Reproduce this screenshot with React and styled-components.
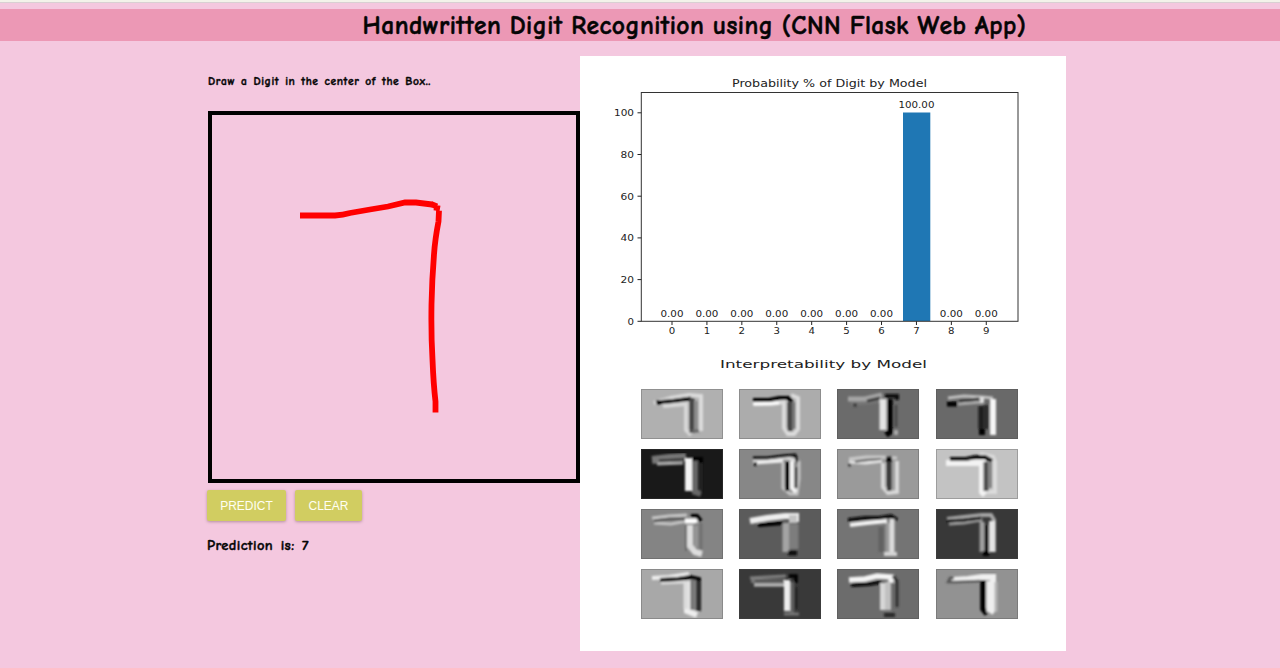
import React from "react";
import styled, { createGlobalStyle } from "styled-components";

const GlobalStyle = createGlobalStyle`
  * { box-sizing: border-box; }
  html, body { margin: 0; height: 668px; overflow: hidden; background: #f4c8df; }
  body { font-family: "Comic Sans MS", "Comic Neue", "Open Sans", sans-serif; color: #050505; }
`;

const Page = styled.div`
  height: 668px;
  border-top: 2px solid #f3f3ea;
  box-shadow: inset 0 1px 0 #d9d0d3;
  padding-top: 7px;
`;

const Header = styled.header`
  height: 32px;
  background: #ec98b5;
  display: flex;
  justify-content: center;
  padding-left: 109px;
`;

const Title = styled.h1`
  margin: 0;
  font-size: 25.5px;
  line-height: 34px;
  font-weight: 700;
  letter-spacing: 0.45px;
  word-spacing: -1px;
  font-kerning: none;
  font-variant-ligatures: none;
  -webkit-text-stroke: 0.5px #050505;
  white-space: nowrap;
`;

const Main = styled.main`
  display: flex;
  align-items: flex-start;
  padding: 15px 0 0 207px;
`;

const DrawColumn = styled.section`
  width: 373px;
  padding-top: 16px;
`;

const Hint = styled.h2`
  margin: 0 0 20px;
  padding-left: 1px;
  height: 19px;
  line-height: 19px;
  font-size: 11.5px;
  font-weight: 700;
  letter-spacing: 0.58px;
  word-spacing: 1.3px;
  font-kerning: none;
  font-variant-ligatures: none;
  -webkit-text-stroke: 0.4px #050505;
  white-space: nowrap;
`;

const Board = styled.div`
  margin-left: 1px;
  width: 372px;
  height: 372px;
  border: 4px solid #000;
  svg { display: block; }
`;

const Buttons = styled.div`
  display: flex;
  gap: 9px;
  margin-top: 7px;
`;

const Button = styled.button`
  width: ${(p) => p.$width}px;
  height: 31px;
  padding: 0;
  border: 0;
  border-radius: 2px;
  background: #d1cd61;
  color: #fffff2;
  font: 12px "Liberation Sans", Arial, sans-serif;
  box-shadow: 0 1px 3px rgba(90, 60, 70, 0.4);
`;

const Result = styled.p`
  margin: 15px 0 0;
  font-size: 14.5px;
  line-height: 20px;
  font-weight: 700;
  letter-spacing: 0.4px;
  word-spacing: 2px;
  -webkit-text-stroke: 0.4px #050505;
  white-space: nowrap;
`;

const Report = styled.section`
  width: 486px;
  height: 595px;
  background: #fff;
`;

const Chart = styled.svg`
  display: block;
  font-family: "DejaVu Sans", sans-serif;
  fill: #222;
`;

const MapGrid = styled.div`
  display: grid;
  grid-template-columns: repeat(4, 82px);
  grid-auto-rows: 50px;
  column-gap: 16.4px;
  row-gap: 9.8px;
  padding: 3.4px 0 0 60.6px;
`;

const FeatureMap = styled.svg`
  display: block;
  width: 82px;
  height: 50px;
  background: ${(p) => p.$shade};
  border: 1px solid rgba(70, 70, 70, 0.3);
`;

const Label = ({ x, y, width, size = 10, anchor = "middle", children }) => (
  <text x={x} y={y} fontSize={size} textAnchor={anchor} textLength={width} lengthAdjust="spacingAndGlyphs">
    {children}
  </text>
);

const digits = [0, 1, 2, 3, 4, 5, 6, 7, 8, 9];
const ticks = [0, 20, 40, 60, 80, 100];

// Each stroke is [path, colour, width] in tile pixels.
const maps = [
  ["#b0b0b0", [
    ["M13 14L30 9L48 6L60 7V42", "#dcdcdc", 4], ["M22 17L45 15V41L50 46", "#d8d8d8", 4],
    ["M15 13.500L32 12L50 9.500", "#000", 4], ["M51 9V44", "#444", 5], ["M55 12V42", "#8c8c8c", 4], ["M51 42H58", "#666", 3]]],
  ["#acacac", [
    ["M15 15L32 15L45 13V39L49 45H55L59 40V9L52 6", "#dcdcdc", 4], ["M14 15L40 14", "#fff", 3],
    ["M14 11H30L40 9L50 9L53 13", "#050505", 4], ["M51 13V42", "#444", 5], ["M55 13V40", "#777", 3]]],
  ["#6b6b6b", [
    ["M11 10H28L45 6", "#a5a5a5", 5], ["M14 15L30 14L44 12", "#777", 3], ["M16 16H20M30 12L43 9", "#3b3b3b", 3],
    ["M46 10V41", "#e4e4e4", 7], ["M48 7H60V11", "#111", 4], ["M53 10V43L49 46", "#050505", 5.500], ["M59 16V38", "#4c4c4c", 3], ["M59 41V46", "#aaa", 4]]],
  ["#696969", [
    ["M12 9L28 7L46 8L57 9", "#c0c0c0", 3], ["M22 15L47 13", "#aaa", 3], ["M11 15H21", "#050505", 5], ["M23 12L43 10", "#383838", 3],
    ["M45 17V40", "#1b1b1b", 5], ["M50 16V40", "#2b2b2b", 5], ["M46 40V46", "#000", 6], ["M57 10V46", "#f5f5f5", 6], ["M46 8V14", "#ddd", 4]]],
  ["#191919", [
    ["M11 11L28 9L45 8", "#777", 8], ["M16 15L42 14", "#aaa", 3], ["M18 11.500L46 10", "#222", 2],
    ["M48 9V42", "#f4f4f4", 8], ["M54 12V43L60 45", "#666", 6], ["M51 10H60V14", "#000", 4], ["M60 14V43", "#292929", 2]]],
  ["#878787", [
    ["M14 12L32 11L48 9L60 12", "#dedede", 3], ["M16 14L44 12", "#eee", 3], ["M14 9H28L44 7L56 6L59 14", "#080808", 3],
    ["M44 13V39L51 45H58L60 30V12", "#c5c5c5", 3], ["M48 13V42", "#050505", 4], ["M53 12V39L57 43", "#f4f4f4", 4], ["M57 18V39", "#444", 3], ["M15 15H18", "#111", 4]]],
  ["#9a9a9a", [
    ["M12 10L29 8L45 8L60 9", "#cacaca", 3], ["M12 13L29 14L45 12", "#e4e4e4", 3], ["M18 13L30 11L44 10", "#666", 2],
    ["M46 14V38L51 44L60 43V12", "#d8d8d8", 4], ["M52 10V42", "#383838", 4.500], ["M49 10H55", "#050505", 5], ["M11 16H14", "#444", 3]]],
  ["#c3c3c3", [
    ["M10 14H46V43L49 46", "#f3f3f3", 6], ["M44 5L57 8L59 13V43H50", "#dcdcdc", 4], ["M14 10L30 10L39 8L49 8L56 12", "#080808", 4],
    ["M50 13V42", "#4b4b4b", 5], ["M54 13V39", "#858585", 4]]],
  ["#848484", [
    ["M11 9L28 7L46 6", "#c8c8c8", 3], ["M13 14L30 15L46 12", "#c4c4c4", 3], ["M13 12L29 10L45 10", "#5b5b5b", 3],
    ["M44 12H54V14", "#fff", 5], ["M49 16V37L54 43L61 45", "#ddd", 6], ["M45 16V42", "#686868", 2], ["M50 7H56L60 12", "#050505", 4], ["M60 14V41", "#707070", 3], ["M55 17V38", "#999", 3]]],
  ["#5b5b5b", [
    ["M11 12L28 9L46 7H57V13", "#eee", 6], ["M54 6V14", "#c4c4c4", 8], ["M19 16L32 15L44 14", "#000", 4], ["M47 14V43", "#a4a4a4", 7], ["M55 15V40", "#7d7d7d", 9], ["M49 44H58", "#111", 5]]],
  ["#747474", [
    ["M11 11L28 9L42 9L54 7L60 11", "#101010", 4], ["M13 16L30 14L50 12", "#f4f4f4", 4], ["M44 18V43", "#606060", 5],
    ["M51 14V43", "#9a9a9a", 5], ["M55 10V43", "#ddd", 5], ["M47 45H60", "#d4d4d4", 4]]],
  ["#383838", [
    ["M11 10L28 8L46 6H55L58 11V43", "#a4a4a4", 4], ["M13 15L28 14L45 11V43", "#999", 3], ["M11 12L28 11L45 9", "#080808", 3],
    ["M50 16V45", "#111", 4], ["M56 12V43", "#e4e4e4", 6], ["M47 13V42", "#a4a4a4", 3], ["M50 42V47", "#000", 6]]],
  ["#a8a8a8", [
    ["M11 9L28 8L48 5", "#eee", 4], ["M20 14L43 13", "#ddd", 3], ["M19 11L37 10L49 8L58 10V42", "#050505", 4], ["M46 12V42L56 46", "#eee", 6],
    ["M52 11V41", "#777", 5], ["M57 12V42", "#333", 4], ["M45 12V40", "#ddd", 5]]],
  ["#393939", [
    ["M11 9L28 8L47 7", "#808080", 3], ["M15 16H47", "#c0c0c0", 3], ["M12 12H46", "#777", 4], ["M16 12H44", "#444", 2], ["M48 11V42", "#eee", 6],
    ["M53 13V45", "#646464", 4], ["M50 7H57V14", "#000", 3.500], ["M57 18V40", "#222", 3], ["M45 45H60", "#777", 3]]],
  ["#6c6c6c", [
    ["M12 11L28 10L40 7L54 8V14", "#f4f4f4", 5.500], ["M14 16L32 15L45 13", "#080808", 4], ["M46 14V41", "#d7d7d7", 6],
    ["M51 13V41", "#c0c0c0", 6], ["M56 7L60 12V38", "#333", 3], ["M47 46H58", "#252525", 4]]],
  ["#929292", [
    ["M16 11L32 10L46 8H57V40L54 44", "#f0f0f0", 6], ["M18 9H14L12 13H20L44 12", "#555", 2.500], ["M47 11V40L51 45", "#050505", 5.500],
    ["M54 12V43", "#eee", 7], ["M60 13V43", "#b4b4b4", 3]]],
];

export default function App() {
  return (
    <>
      <GlobalStyle />
      <Page>
        <Header><Title>Handwritten Digit Recognition using (CNN Flask Web App)</Title></Header>
        <Main>
          <DrawColumn>
            <Hint>Draw a Digit in the center of the Box..</Hint>
            <Board>
              <svg width="364" height="363" viewBox="212 115.5 364 363" fill="none" stroke="#f00" strokeWidth="5.8">
                <path d="M300 216H335Q343 215.500 350 213.500L370 210L388 207L405 203L416 203L432 205" />
                <path d="M431 204.500L437 207M434 208L440 209M439 211L438.500 222Q435 240 434 255Q432 280 431.500 305Q431 335 432.500 360Q433.500 385 435.500 402V413" />
              </svg>
            </Board>
            <Buttons>
              <Button $width={79}>PREDICT</Button>
              <Button $width={67}>CLEAR</Button>
            </Buttons>
            <Result>Prediction is: 7</Result>
          </DrawColumn>
          <Report>
            <Chart width="486" height="330" viewBox="580 56 486 330">
              <Label x={829.5} y={87} width={195} size={10.5}>Probability % of Digit by Model</Label>
              <rect x="903" y="112.500" width="27.300" height="208.500" fill="#1f77b4" />
              <rect x="641.300" y="92.500" width="376.700" height="228.800" fill="none" stroke="#333" strokeWidth="1" />
              {ticks.map((t) => (
                <g key={t}>
                  <path d={`M637.500 ${321.3 - t * 2.085}H641.300`} stroke="#222" />
                  <Label x={634} y={324.8 - t * 2.085} width={t === 100 ? 20 : t ? 13.5 : 6.5} size={9.2} anchor="end">{t}</Label>
                </g>
              ))}
              {digits.map((d) => {
                const x = 672 + d * 34.92;
                return (
                  <g key={d}>
                    <path d={`M${x} 321.300V325`} stroke="#222" />
                    <Label x={x} y={334} width={6.5} size={9.2}>{d}</Label>
                    <Label x={x} y={d === 7 ? 108 : 316.5} width={d === 7 ? 36 : 23} size={9.2}>{d === 7 ? "100.00" : "0.00"}</Label>
                  </g>
                );
              })}
              <Label x={823.5} y={367.5} width={207} size={11}>Interpretability by Model</Label>
            </Chart>
            <MapGrid>
              {maps.map(([shade, strokes], i) => (
                <FeatureMap key={i} $shade={shade} viewBox="1 1 80 48">
                  <defs><filter id={`soft${i}`} x="-10%" y="-10%" width="120%" height="120%"><feGaussianBlur stdDeviation="1.1" /></filter></defs>
                  <g filter={`url(#soft${i})`} fill="none">
                    {strokes.map(([d, stroke, w], j) => <path key={j} d={d} stroke={stroke} strokeWidth={w} />)}
                  </g>
                </FeatureMap>
              ))}
            </MapGrid>
          </Report>
        </Main>
      </Page>
    </>
  );
}
